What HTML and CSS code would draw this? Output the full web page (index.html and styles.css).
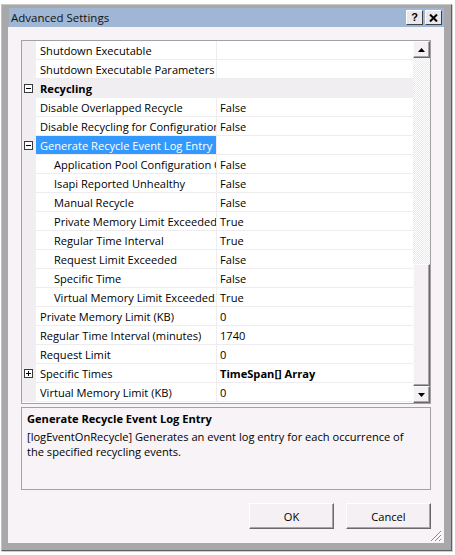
FILE: index.html
```html
<!DOCTYPE html>
<html>
<head>
<meta charset="utf-8">
<link rel="stylesheet" href="styles.css">
</head>
<body>
<div class="window">
  <div class="titlebar">
    <span class="title">Advanced Settings</span>
    <div class="tbtns">
      <span class="tbtn">?</span>
      <span class="tbtn"><svg width="9" height="8" viewBox="0 0 9 8"><path d="M1 0.5 L8 7.5 M8 0.5 L1 7.5" stroke="#000" stroke-width="2"/></svg></span>
    </div>
  </div>
  <div class="client">
    <div class="grid">
      <div class="rows">
        <div class="row"><span class="gut"></span><span class="name">Shutdown Executable</span><span class="val"></span></div>
        <div class="row"><span class="gut"></span><span class="name">Shutdown Executable Parameters</span><span class="val"></span></div>
        <div class="row cat"><span class="gut"><svg class="exp" width="9" height="9" viewBox="0 0 9 9"><rect x="0.5" y="0.5" width="8" height="8" fill="#fff" stroke="#3a3a3a"/><path d="M2 4.5 H7" stroke="#000"/></svg></span><span class="name">Recycling</span><span class="val"></span></div>
        <div class="row"><span class="gut"></span><span class="name">Disable Overlapped Recycle</span><span class="val">False</span></div>
        <div class="row"><span class="gut"></span><span class="name">Disable Recycling for Configuration Changes</span><span class="val">False</span></div>
        <div class="row sel"><span class="gut"><svg class="exp" width="9" height="9" viewBox="0 0 9 9"><rect x="0.5" y="0.5" width="8" height="8" fill="#fff" stroke="#3a3a3a"/><path d="M2 4.5 H7" stroke="#000"/></svg></span><span class="name">Generate Recycle Event Log Entry</span><span class="val"></span></div>
        <div class="row sub"><span class="gut"></span><span class="name">Application Pool Configuration Changed</span><span class="val">False</span></div>
        <div class="row sub"><span class="gut"></span><span class="name">Isapi Reported Unhealthy</span><span class="val">False</span></div>
        <div class="row sub"><span class="gut"></span><span class="name">Manual Recycle</span><span class="val">False</span></div>
        <div class="row sub"><span class="gut"></span><span class="name">Private Memory Limit Exceeded</span><span class="val">True</span></div>
        <div class="row sub"><span class="gut"></span><span class="name">Regular Time Interval</span><span class="val">True</span></div>
        <div class="row sub"><span class="gut"></span><span class="name">Request Limit Exceeded</span><span class="val">False</span></div>
        <div class="row sub"><span class="gut"></span><span class="name">Specific Time</span><span class="val">False</span></div>
        <div class="row sub"><span class="gut"></span><span class="name">Virtual Memory Limit Exceeded</span><span class="val">True</span></div>
        <div class="row"><span class="gut"></span><span class="name">Private Memory Limit (KB)</span><span class="val">0</span></div>
        <div class="row"><span class="gut"></span><span class="name">Regular Time Interval (minutes)</span><span class="val">1740</span></div>
        <div class="row"><span class="gut"></span><span class="name">Request Limit</span><span class="val">0</span></div>
        <div class="row"><span class="gut"><svg class="exp" width="9" height="9" viewBox="0 0 9 9"><rect x="0.5" y="0.5" width="8" height="8" fill="#fff" stroke="#3a3a3a"/><path d="M2 4.5 H7 M4.5 2 V7" stroke="#000"/></svg></span><span class="name">Specific Times</span><span class="val b">TimeSpan[] Array</span></div>
        <div class="row"><span class="gut"></span><span class="name">Virtual Memory Limit (KB)</span><span class="val">0</span></div>
      </div>
      <div class="vscroll">
        <div class="sbtn"><svg width="7" height="4" viewBox="0 0 7 4"><path d="M3.5 0 L7 4 L0 4 Z" fill="#000"/></svg></div>
        <div class="track"><div class="thumb"></div></div>
        <div class="sbtn"><svg width="7" height="4" viewBox="0 0 7 4"><path d="M0 0 L7 0 L3.5 4 Z" fill="#000"/></svg></div>
      </div>
    </div>
    <div class="desc">
      <div class="desc-title">Generate Recycle Event Log Entry</div>
      <div class="desc-text">[logEventOnRecycle] Generates an event log entry for each occurrence of<br>the specified recycling events.</div>
    </div>
    <div class="actions">
      <button class="btn ok">OK</button>
      <button class="btn cancel">Cancel</button>
    </div>
    <svg class="grip" width="12" height="12" viewBox="0 0 12 12">
      <path d="M11 1 L1 11 M11 5 L5 11 M11 9 L9 11" stroke="#8a8a8a" stroke-width="1"/>
      <path d="M12 2 L2 12 M12 6 L6 12 M12 10 L10 12" stroke="#ffffff" stroke-width="1"/>
    </svg>
  </div>
</div>
</body>
</html>
```

FILE: styles.css
```css
* { box-sizing: border-box; }
html, body { margin: 0; padding: 0; }
body {
  background: #ffffff;
  width: 455px;
  height: 555px;
  overflow: hidden;
  font-family: "Open Sans", "Liberation Sans", sans-serif;
  font-size: 11.1px;
  color: #000;
}
.window {
  position: relative;
  margin: 4px 0 0 1px;
  width: 451px;
  height: 547px;
  background: #a8a7a9;
  border: 1px solid #5e5e5e;
  border-top-color: #c8c8c8;
  border-left-color: #c2c2c2;
  padding: 3px 7px 7px 6px;
  display: flex;
  flex-direction: column;
  box-shadow: 1px 1px 0 #cfcfcf;
}
.titlebar {
  height: 19px;
  margin-left: 1px;
  background: #9fb7d4;
  display: flex;
  align-items: center;
  justify-content: space-between;
  padding: 0 2px 0 2px;
}
.title { font-size: 11.5px; color: #111; line-height: 19px; }
.tbtns { display: flex; gap: 2px; }
.tbtn {
  width: 17px;
  height: 15px;
  background: #ebe8ec;
  border: 1px solid;
  border-color: #ffffff #404040 #404040 #ffffff;
  display: flex;
  align-items: center;
  justify-content: center;
  font-weight: bold;
  font-size: 11px;
  line-height: 13px;
  font-family: "Liberation Sans", sans-serif;
}
.client {
  flex: 1;
  position: relative;
  background: #f7f3f6;
  padding: 13px 13px 0 13px;
  display: flex;
  flex-direction: column;
}
.grid {
  height: 364px;
  border: 1px solid #a3a1a5;
  background: #ffffff;
  display: flex;
}
.rows { flex: 1; display: flex; flex-direction: column; }
.row {
  display: grid;
  grid-template-columns: 14px 181px 1fr;
  height: 19px;
  line-height: 19px;
}
.gut {
  background: #f1eef2;
  display: flex;
  align-items: center;
  padding-left: 2px;
}
.name {
  border-bottom: 1px solid #efecf0;
  border-right: 1px solid #efecf0;
  padding-left: 4px;
  white-space: nowrap;
  overflow: hidden;
}
.val {
  border-bottom: 1px solid #efecf0;
  padding-left: 3px;
  white-space: nowrap;
  overflow: hidden;
}
.row.cat { background: #f1eef2; }
.row.cat .name { border-color: transparent; font-weight: bold; }
.row.cat .val { border-color: transparent; }
.sub .name { padding-left: 18px; }
.sel .name { background: #3399ff; color: #ffffff; }
.b { font-weight: bold; }
.vscroll { width: 17px; display: flex; flex-direction: column; }
.sbtn {
  height: 17px;
  background: #f4f0f3;
  border: 1px solid;
  border-color: #fbfbfb #696969 #696969 #fbfbfb;
  box-shadow: inset -1px -1px 0 #a5a5a5;
  display: flex;
  align-items: center;
  justify-content: center;
}
.track {
  flex: 1;
  background: repeating-conic-gradient(#ffffff 0 25%, #ebe8ec 0 50%) 0 0 / 2px 2px;
  display: flex;
  flex-direction: column;
}
.thumb {
  margin-top: 206px;
  flex: 1;
  background: #f4f0f3;
  border: 1px solid;
  border-color: #fbfbfb #696969 #696969 #fbfbfb;
  box-shadow: inset -1px -1px 0 #a5a5a5;
}
.desc {
  margin-top: 3px;
  height: 83px;
  border: 1px solid #a3a1a5;
  padding: 3px 5px;
}
.desc-title { font-weight: bold; line-height: 15px; margin-bottom: 3px; }
.desc-text { line-height: 15px; white-space: nowrap; }
.actions {
  margin-top: 13px;
  display: flex;
  justify-content: flex-end;
  gap: 12px;
}
.btn {
  width: 85px;
  height: 26px;
  margin: 0;
  padding: 0;
  background: #f4f0f3;
  border: 1px solid;
  border-color: #ffffff #696969 #696969 #ffffff;
  box-shadow: inset -1px -1px 0 #a5a5a5;
  font-family: "Open Sans", "Liberation Sans", sans-serif;
  font-size: 11.1px;
  color: #000;
}
.grip { position: absolute; right: 2px; bottom: 1px; }
```
